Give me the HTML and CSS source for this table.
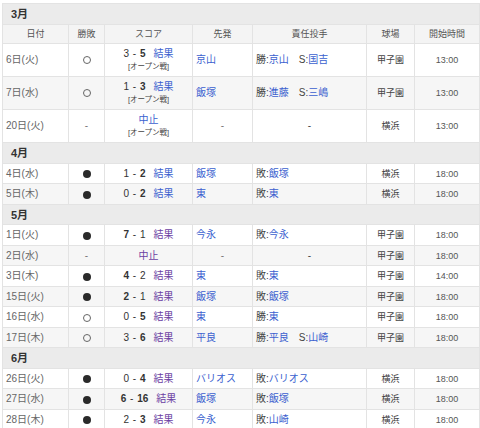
FILE: index.html
```html
<!DOCTYPE html>
<html lang="ja">
<head>
<meta charset="utf-8">
<title>試合日程</title>
<link rel="stylesheet" href="styles.css">
</head>
<body>
<table class="sched">
<colgroup>
<col class="c-date"><col class="c-res"><col class="c-score"><col class="c-sp"><col class="c-pit"><col class="c-park"><col class="c-time">
</colgroup>
<tbody>
<tr class="month"><th colspan="7">3月</th></tr>
<tr class="head"><th>日付</th><th>勝敗</th><th>スコア</th><th>先発</th><th>責任投手</th><th>球場</th><th>開始時間</th></tr>
<tr class="game tall"><td class="date">6日(火)</td><td class="res"><span class="win"></span></td><td class="score"><span class="pts">3 - <b>5</b></span><a class="link">結果</a><div class="note">[オープン戦]</div></td><td class="sp"><a class="link">京山</a></td><td class="pit">勝:<a class="link">京山</a><span class="sv">S:<a class="link">国吉</a></span></td><td class="park">甲子園</td><td class="time">13:00</td></tr>
<tr class="game tall alt"><td class="date">7日(水)</td><td class="res"><span class="win"></span></td><td class="score"><span class="pts">1 - <b>3</b></span><a class="link">結果</a><div class="note">[オープン戦]</div></td><td class="sp"><a class="link">飯塚</a></td><td class="pit">勝:<a class="link">進藤</a><span class="sv">S:<a class="link">三嶋</a></span></td><td class="park">甲子園</td><td class="time">13:00</td></tr>
<tr class="game tall"><td class="date">20日(火)</td><td class="res dash">-</td><td class="score"><a class="link">中止</a><div class="note">[オープン戦]</div></td><td class="sp dash">-</td><td class="pit dash">-</td><td class="park">横浜</td><td class="time">13:00</td></tr>

<tr class="month"><th colspan="7">4月</th></tr>
<tr class="game"><td class="date">4日(水)</td><td class="res"><span class="loss"></span></td><td class="score"><span class="pts">1 - <b>2</b></span><a class="link">結果</a></td><td class="sp"><a class="link">飯塚</a></td><td class="pit">敗:<a class="link">飯塚</a></td><td class="park">横浜</td><td class="time">18:00</td></tr>
<tr class="game alt"><td class="date">5日(木)</td><td class="res"><span class="loss"></span></td><td class="score"><span class="pts">0 - <b>2</b></span><a class="link">結果</a></td><td class="sp"><a class="link">東</a></td><td class="pit">敗:<a class="link">東</a></td><td class="park">横浜</td><td class="time">18:00</td></tr>

<tr class="month"><th colspan="7">5月</th></tr>
<tr class="game"><td class="date">1日(火)</td><td class="res"><span class="loss"></span></td><td class="score"><span class="pts"><b>7</b> - 1</span><a class="link visited">結果</a></td><td class="sp"><a class="link">今永</a></td><td class="pit">敗:<a class="link">今永</a></td><td class="park">甲子園</td><td class="time">18:00</td></tr>
<tr class="game alt"><td class="date">2日(水)</td><td class="res dash">-</td><td class="score"><a class="link visited">中止</a></td><td class="sp dash">-</td><td class="pit dash">-</td><td class="park">甲子園</td><td class="time">18:00</td></tr>
<tr class="game"><td class="date">3日(木)</td><td class="res"><span class="loss"></span></td><td class="score"><span class="pts"><b>4</b> - 2</span><a class="link visited">結果</a></td><td class="sp"><a class="link">東</a></td><td class="pit">敗:<a class="link">東</a></td><td class="park">甲子園</td><td class="time">14:00</td></tr>
<tr class="game alt"><td class="date">15日(火)</td><td class="res"><span class="loss"></span></td><td class="score"><span class="pts"><b>2</b> - 1</span><a class="link visited">結果</a></td><td class="sp"><a class="link">飯塚</a></td><td class="pit">敗:<a class="link">飯塚</a></td><td class="park">甲子園</td><td class="time">18:00</td></tr>
<tr class="game"><td class="date">16日(水)</td><td class="res"><span class="win"></span></td><td class="score"><span class="pts">0 - <b>5</b></span><a class="link visited">結果</a></td><td class="sp"><a class="link">東</a></td><td class="pit">勝:<a class="link">東</a></td><td class="park">甲子園</td><td class="time">18:00</td></tr>
<tr class="game alt"><td class="date">17日(木)</td><td class="res"><span class="win"></span></td><td class="score"><span class="pts">3 - <b>6</b></span><a class="link visited">結果</a></td><td class="sp"><a class="link">平良</a></td><td class="pit">勝:<a class="link">平良</a><span class="sv">S:<a class="link">山崎</a></span></td><td class="park">甲子園</td><td class="time">18:00</td></tr>

<tr class="month"><th colspan="7">6月</th></tr>
<tr class="game"><td class="date">26日(火)</td><td class="res"><span class="loss"></span></td><td class="score"><span class="pts">0 - <b>4</b></span><a class="link visited">結果</a></td><td class="sp"><a class="link">バリオス</a></td><td class="pit">敗:<a class="link">バリオス</a></td><td class="park">横浜</td><td class="time">18:00</td></tr>
<tr class="game alt"><td class="date">27日(水)</td><td class="res"><span class="loss"></span></td><td class="score"><span class="pts"><b>6</b> - <b>16</b></span><a class="link visited">結果</a></td><td class="sp"><a class="link">飯塚</a></td><td class="pit">敗:<a class="link">飯塚</a></td><td class="park">横浜</td><td class="time">18:00</td></tr>
<tr class="game"><td class="date">28日(木)</td><td class="res"><span class="loss"></span></td><td class="score"><span class="pts">2 - <b>3</b></span><a class="link visited">結果</a></td><td class="sp"><a class="link">今永</a></td><td class="pit">敗:<a class="link">山崎</a></td><td class="park">横浜</td><td class="time">18:00</td></tr>
</tbody>
</table>
</body>
</html>
```

FILE: styles.css
```css
* { box-sizing: border-box; }
html, body { margin: 0; padding: 0; background: #fff; }
body {
  font-family: "Liberation Sans", "Noto Sans CJK JP", sans-serif;
  color: #333;
  font-size: 10px;
}
.sched {
  border-collapse: collapse;
  table-layout: fixed;
  width: 477px;
  margin: 3px 0 0 2px;
}
.c-date { width: 66px; }
.c-res { width: 36px; }
.c-score { width: 88px; }
.c-sp { width: 60px; }
.c-pit { width: 114px; }
.c-park { width: 48px; }
.c-time { width: 65px; }

.sched th, .sched td {
  border: 1px solid #e3e3e3;
  padding: 0 3px;
  line-height: 12px;
  font-weight: normal;
  white-space: nowrap;
  overflow: hidden;
}

.month { height: 20.5px; }
.month th {
  background: #ebebeb;
  text-align: left;
  padding-left: 8px;
  font-size: 11px;
  font-weight: bold;
  color: #333;
}

.head { height: 19px; }
.head th {
  background: #f4f4f4;
  text-align: center;
  font-size: 9px;
  color: #555;
}

.game { height: 20.5px; background: #fff; }
.game.alt { background: #f6f6f6; }
.game.tall { height: 33.3px; }

.date { color: #666; padding-left: 4px; }
.res { text-align: center; }
.dash { color: #777; text-align: center; }

.win, .loss {
  display: inline-block;
  vertical-align: middle;
  border-radius: 50%;
}
.win { width: 8px; height: 8px; border: 1px solid #666; }
.loss { width: 8px; height: 8px; background: #2a2a2a; }

.score { text-align: center; }
.pts {
  font-weight: normal;
  color: #333;
  margin-right: 8px;
  word-spacing: 1px;
}
.pts b { font-weight: bold; }
.note {
  font-size: 7.5px;
  color: #444;
  line-height: 11px;
  margin-top: 1px;
}

.link { color: #3b5fcf; text-decoration: none; }
.link.visited { color: #6c3fa3; }

.sp { padding-left: 3px; }
.pit { color: #444; padding-left: 3px; }
.sv { margin-left: 10px; }

.park { text-align: center; font-size: 9px; color: #444; }
.time { text-align: center; font-size: 9px; color: #555; }
```
